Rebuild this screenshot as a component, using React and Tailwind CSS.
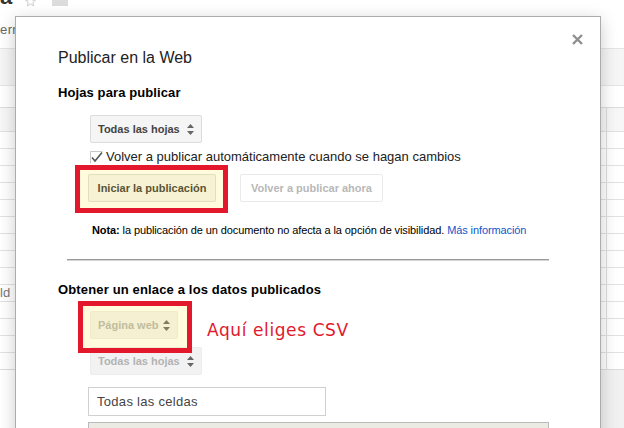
import React from "react";

// little up/down arrows used by the select buttons
function SortArrows({ color = "#666" }) {
  return (
    <svg width="7" height="11" viewBox="0 0 7 11">
      <path d="M3.5 0 L7 4 L0 4 Z" fill={color} />
      <path d="M0 7 L7 7 L3.5 11 Z" fill={color} />
    </svg>
  );
}

function SelectButton({ label, disabled, width }) {
  return (
    <div
      className={`flex h-[28px] items-center justify-between rounded-[2px] border pl-[7px] pr-[7px] text-[11px] font-bold ${
        disabled
          ? "border-[#ececec] bg-[#f2f2f2] text-[#b3b3b3]"
          : "border-[#dcdcdc] bg-[#f5f5f5] text-[#444]"
      } ${width}`}
    >
      <span>{label}</span>
      <SortArrows color="#666" />
    </div>
  );
}

function Spreadsheet() {
  const rows = Array.from({ length: 14 });
  return (
    <div className="flex h-full w-full flex-col bg-white text-[13px] text-[#666]">
      {/* top bar with title remnants */}
      <div className="relative h-[48px]">
        <div className="flex h-[7px] items-start overflow-hidden">
          <span className="-mt-[14px] text-[22px] font-bold leading-[22px] text-[#333]">a</span>
          <svg className="ml-[13px] -mt-[4px]" width="11" height="11" viewBox="0 0 11 11">
            <path
              d="M5.5 0.5 L7 4 L10.5 4.2 L7.8 6.5 L8.7 10 L5.5 8 L2.3 10 L3.2 6.5 L0.5 4.2 L4 4 Z"
              fill="none"
              stroke="#cfcfcf"
            />
          </svg>
          <span className="ml-[16px] h-[6px] w-[16px] bg-[#dcdcdc]" />
        </div>
        <div className="mt-[16px] leading-[14px] tracking-[0.4px]">erra</div>
      </div>
      <div className="h-[37px] border-t border-[#e5e5e5] bg-[#f5f5f5]" />
      <div className="h-[22px] border-t border-[#e5e5e5]" />
      <div className="flex h-[24px] border-t border-[#dcdcdc] bg-[#f7f7f7]">
        <div className="w-[607px] border-r border-[#dcdcdc]" />
      </div>
      {rows.map((_, i) => (
        <div key={i} className="flex h-[17px] border-t border-[#e2e2e2]">
          <div className="w-[607px] border-r border-[#dcdcdc] text-[13px] leading-[16px] text-[#777]">
            {i === 9 ? "ld" : ""}
          </div>
        </div>
      ))}
      <div className="flex flex-1 border-t border-[#dcdcdc]">
        <div className="w-[15px] bg-white" />
        <div className="flex-1 bg-[#f1f1f1]" />
      </div>
    </div>
  );
}

export default function App() {
  return (
    <div
      className="relative h-[428px] w-[624px] overflow-hidden bg-white"
      style={{ fontFamily: '"Liberation Sans", Arial, sans-serif' }}
    >
      <Spreadsheet />

      {/* Publish dialog */}
      <div className="absolute left-[15px] top-[16px] h-[440px] w-[586px] border border-[#acacac] bg-white shadow-[0_4px_16px_rgba(0,0,0,0.2)]">
        {/* close */}
        <svg
          className="absolute right-[17px] top-[17px]"
          width="11"
          height="11"
          viewBox="0 0 11 11"
        >
          <path d="M1 1 L10 10 M10 1 L1 10" stroke="#8f8f8f" strokeWidth="2.4" />
        </svg>

        <div className="pl-[42px] pt-[31px] text-[#222]">
          <h2
            className="text-[16px] leading-[20px]"
            style={{ fontFamily: '"Liberation Sans Narrow", "Arial Narrow", sans-serif' }}
          >
            Publicar en la Web
          </h2>
          <h3 className="mt-[17px] text-[13px] font-bold leading-[16px] tracking-[0.1px] text-black">
            Hojas para publicar
          </h3>
          <div className="ml-[32px] mt-[14px]">
            <SelectButton label="Todas las hojas" width="w-[112px]" />
          </div>
          <div className="ml-[32px] mt-[6px] flex items-center gap-[3px]">
            <svg width="13" height="13" viewBox="0 0 13 13">
              <path d="M0.5 12.5 V0.5 H12.5" stroke="#c8c8c8" fill="none" />
              <path d="M2 6.5 L5 10 L12 1.5" stroke="#555" strokeWidth="1.6" fill="none" />
            </svg>
            <span className="text-[13px] leading-[16px]">
              Volver a publicar automáticamente cuando se hagan cambios
            </span>
          </div>
          <div className="ml-[30px] mt-[9px] flex items-center gap-[24px]">
            <div className="flex h-[28px] w-[128px] items-center justify-center rounded-[2px] border border-[#dcdcdc] bg-[#f5f5f5] text-[11px] font-bold text-[#333]">
              Iniciar la publicación
            </div>
            <div className="flex h-[28px] w-[143px] items-center justify-center rounded-[2px] border border-[#eaeaea] bg-white text-[11px] font-bold text-[#b8b8b8]">
              Volver a publicar ahora
            </div>
          </div>
          <p className="ml-[34px] mt-[21px] text-[11px] leading-[14px] tracking-[-0.1px] text-black">
            <span className="font-bold">Nota:</span> la publicación de un documento no afecta a la
            opción de visibilidad. <span className="text-[#1155cc]">Más información</span>
          </p>
        </div>

        <div className="mx-[51px] mt-[22px] h-[2px] border-t border-[#9a9a9a] bg-[#d4d4d4]" />

        <div className="pl-[42px] text-[#222]">
          <h3 className="mt-[21px] text-[13px] font-bold leading-[16px] tracking-[0.15px] text-black">
            Obtener un enlace a los datos publicados
          </h3>
          <div className="ml-[32px] mt-[13px] flex items-start gap-[29px]">
            <SelectButton label="Página web" disabled width="w-[88px]" />
            <span
              className="mt-[9px] text-[17px] leading-[20px] tracking-[0.6px] text-[#e3182d]"
              style={{ fontFamily: '"DejaVu Sans", sans-serif' }}
            >
              Aquí eliges CSV
            </span>
          </div>
          <div className="ml-[32px] mt-[7px]">
            <SelectButton label="Todas las hojas" disabled width="w-[112px]" />
          </div>
          <div className="ml-[30px] mt-[12px] flex h-[29px] w-[238px] items-center border border-[#d0d0d0] pl-[8px] text-[13px] tracking-[0.3px] text-[#444]">
            Todas las celdas
          </div>
          <div className="ml-[30px] mt-[6px] h-[40px] w-[461px] border border-[#bbb] bg-[#ebebe4]" />
        </div>

        {/* red annotation boxes */}
        <div className="absolute left-[59px] top-[148px] h-[48px] w-[153px] border-[5px] border-[#e3182d] bg-[rgba(255,235,59,0.18)]" />
        <div className="absolute left-[62px] top-[284px] h-[52px] w-[114px] border-[5px] border-[#e3182d] bg-[rgba(255,235,59,0.18)]" />
      </div>
    </div>
  );
}
